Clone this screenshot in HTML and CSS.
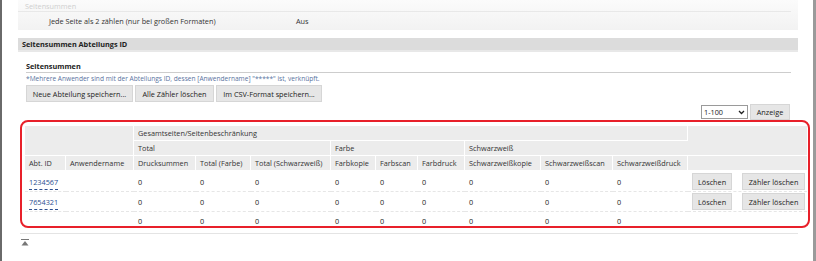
FILE: index.html
```html
<!DOCTYPE html>
<html lang="de">
<head>
  <meta charset="UTF-8" />
  <title>Seitensummen Abteilungs ID</title>
  <link rel="stylesheet" href="styles.css">
</head>
<body>
  <div class="frame">
    <div class="content">

      <div class="prev-section">
        <div class="prev-title">Seitensummen</div>
        <div class="prev-row">
          <span class="prev-label">Jede Seite als 2 zählen (nur bei großen Formaten)</span>
          <span class="prev-value">Aus</span>
        </div>
      </div>

      <div class="bar">Seitensummen Abteilungs ID</div>

      <div class="sub-title">Seitensummen</div>
      <div class="note">*Mehrere Anwender sind mit der Abteilungs ID, dessen [Anwendername] "*****" ist, verknüpft.</div>

      <div class="actions">
        <button class="btn">Neue Abteilung speichern...</button>
        <button class="btn">Alle Zähler löschen</button>
        <button class="btn">Im CSV-Format speichern...</button>
      </div>

      <div class="pager">
        <span class="select-wrap">
          <select class="select">
            <option>1-100</option>
          </select>
          <svg class="chev" width="7" height="5" viewBox="0 0 7 5"><path d="M1 1 L3.5 3.5 L6 1" fill="none" stroke="#222" stroke-width="1.3"/></svg>
        </span>
        <button class="btn btn-show">Anzeige</button>
      </div>

      <div class="highlight">
        <table class="counts">
          <colgroup>
            <col style="width:41px"><col style="width:68px"><col style="width:62px"><col style="width:55px">
            <col style="width:80px"><col style="width:45px"><col style="width:42px"><col style="width:47px">
            <col style="width:76px"><col style="width:72px"><col style="width:75px"><col style="width:119px">
          </colgroup>
          <thead>
            <tr>
              <th colspan="2" rowspan="2"></th>
              <th colspan="9">Gesamtseiten/Seitenbeschränkung</th>
              <th rowspan="2"></th>
            </tr>
            <tr>
              <th colspan="3">Total</th>
              <th colspan="3">Farbe</th>
              <th colspan="3">Schwarzweiß</th>
            </tr>
            <tr>
              <th>Abt. ID</th>
              <th>Anwendername</th>
              <th>Drucksummen</th>
              <th>Total (Farbe)</th>
              <th>Total (Schwarzweiß)</th>
              <th>Farbkopie</th>
              <th>Farbscan</th>
              <th>Farbdruck</th>
              <th>Schwarzweißkopie</th>
              <th>Schwarzweißscan</th>
              <th>Schwarzweißdruck</th>
              <th></th>
            </tr>
          </thead>
          <tbody>
            <tr>
              <td><a class="id-link" href="#">1234567</a></td>
              <td></td>
              <td>0</td><td>0</td><td>0</td><td>0</td><td>0</td><td>0</td><td>0</td><td>0</td><td>0</td>
              <td class="row-actions"><button class="btn btn-small">Löschen</button><button class="btn btn-small">Zähler löschen</button></td>
            </tr>
            <tr>
              <td><a class="id-link" href="#">7654321</a></td>
              <td></td>
              <td>0</td><td>0</td><td>0</td><td>0</td><td>0</td><td>0</td><td>0</td><td>0</td><td>0</td>
              <td class="row-actions"><button class="btn btn-small">Löschen</button><button class="btn btn-small">Zähler löschen</button></td>
            </tr>
            <tr class="sum-row">
              <td></td>
              <td></td>
              <td>0</td><td>0</td><td>0</td><td>0</td><td>0</td><td>0</td><td>0</td><td>0</td><td>0</td>
              <td></td>
            </tr>
          </tbody>
        </table>
      </div>

      <div class="bottom-line"></div>
      <a class="to-top" href="#">
        <svg width="8" height="7" viewBox="0 0 8 7"><rect x="0" y="0" width="8" height="1" fill="#777"/><path d="M0.5 6.5 L4 2 L7.5 6.5 Z" fill="#777"/></svg>
      </a>

    </div>
  </div>
</body>
</html>
```

FILE: styles.css
```css
* {
  box-sizing: border-box;
}

body {
  margin: 0;
  font-family: 'Open Sans', 'Noto Sans', sans-serif;
  font-size: 7.3px;
  color: #333;
  background: #fff;
}

.frame {
  height: 261px;
  overflow: hidden;
  border-left: 2px solid #6a6a6a;
  border-right: 3px solid #9a9a9a;
}

.content {
  margin-left: 16px;
  width: 793px;
}

.prev-section {
  width: 780px;
  height: 30px;
  background: linear-gradient(to bottom, #fbfbfb, #f2f2f2);
}

.prev-title {
  height: 12px;
  padding: 0 0 0 7px;
  margin-right: 7px;
  line-height: 12px;
  color: #cfcfcf;
  border-bottom: 1px solid #e8e8e8;
}

.prev-row {
  display: flex;
  height: 18px;
  align-items: center;
  padding-left: 31px;
}

.prev-label {
  width: 247px;
}

.bar {
  width: 780px;
  height: 14px;
  margin-top: 8px;
  padding-left: 4px;
  line-height: 12px;
  font-weight: bold;
  color: #222;
  background: #dcdcdc;
  border-bottom: 2px solid #e8e8e8;
}

.sub-title {
  margin-top: 10px;
  margin-left: 8px;
  width: 765px;
  height: 11px;
  line-height: 9px;
  font-weight: bold;
  color: #222;
  border-bottom: 1px solid #cdcdcd;
}

.note {
  margin-left: 8px;
  height: 12px;
  line-height: 12px;
  font-size: 6.6px;
  color: #5a73a0;
}

.actions {
  display: flex;
  gap: 2px;
  margin-left: 8px;
  height: 17px;
}

.btn {
  font-family: inherit;
  font-size: 7.3px;
  color: #222;
  background: #e6e6e6;
  border: 1px solid #d6d6d6;
  border-radius: 0;
  padding: 0 5px;
  height: 17px;
  cursor: pointer;
}

.actions .btn:nth-child(1) { width: 107px; }
.actions .btn:nth-child(2) { width: 79px; }
.actions .btn:nth-child(3) { width: 106px; }

.pager {
  display: flex;
  justify-content: flex-end;
  align-items: flex-end;
  gap: 2px;
  width: 772px;
  height: 18px;
}

.select-wrap {
  position: relative;
  display: inline-block;
  margin-bottom: 1px;
}

.select {
  appearance: none;
  width: 47px;
  height: 14px;
  padding: 0 0 0 2px;
  font-family: inherit;
  font-size: 7.3px;
  color: #222;
  background: #fff;
  border: 1px solid #9a9a9a;
  border-radius: 0;
}

.chev {
  position: absolute;
  right: 3px;
  top: 5px;
}

.btn-show {
  width: 40px;
  height: 16px;
}

.highlight {
  margin-left: 2px;
  width: 790px;
  height: 108px;
  border: 2px solid #e8202a;
  border-radius: 8px;
  padding: 4px 1px 0 3px;
}

.counts {
  table-layout: fixed;
  border-collapse: separate;
  border-spacing: 0;
  width: 782px;
}

.counts th {
  background: #ececec;
  font-weight: normal;
  text-align: left;
  height: 15px;
  padding: 0 0 0 4px;
  border-right: 1px solid #fff;
  border-bottom: 1px solid #fff;
  white-space: nowrap;
  overflow: hidden;
}

.counts th:last-child {
  border-right: none;
}

.counts td {
  height: 20px;
  padding: 0 0 0 4px;
  color: #222;
  border-bottom: 1px dashed #e6e6e6;
  white-space: nowrap;
}

.counts tbody tr:first-child td {
  height: 21px;
  padding-top: 1px;
}

.counts .sum-row td {
  height: 18px;
  border-bottom: none;
}

.id-link {
  color: #2c4f90;
  text-decoration: none;
  border-bottom: 1px dashed #2c4f90;
  padding-bottom: 2px;
}

.row-actions {
  display: flex;
  gap: 10px;
  align-items: center;
  padding-left: 4px !important;
}

.btn-small {
  height: 17px;
  padding: 0 4px;
}

.row-actions .btn-small:first-child { width: 40px; }
.row-actions .btn-small:last-child { width: 63px; }

.bottom-line {
  margin-top: 5px;
  margin-left: 2px;
  width: 778px;
  height: 1px;
  background: #e4e4e4;
}

.to-top {
  display: inline-block;
  margin: 4px 0 0 3px;
}
```
